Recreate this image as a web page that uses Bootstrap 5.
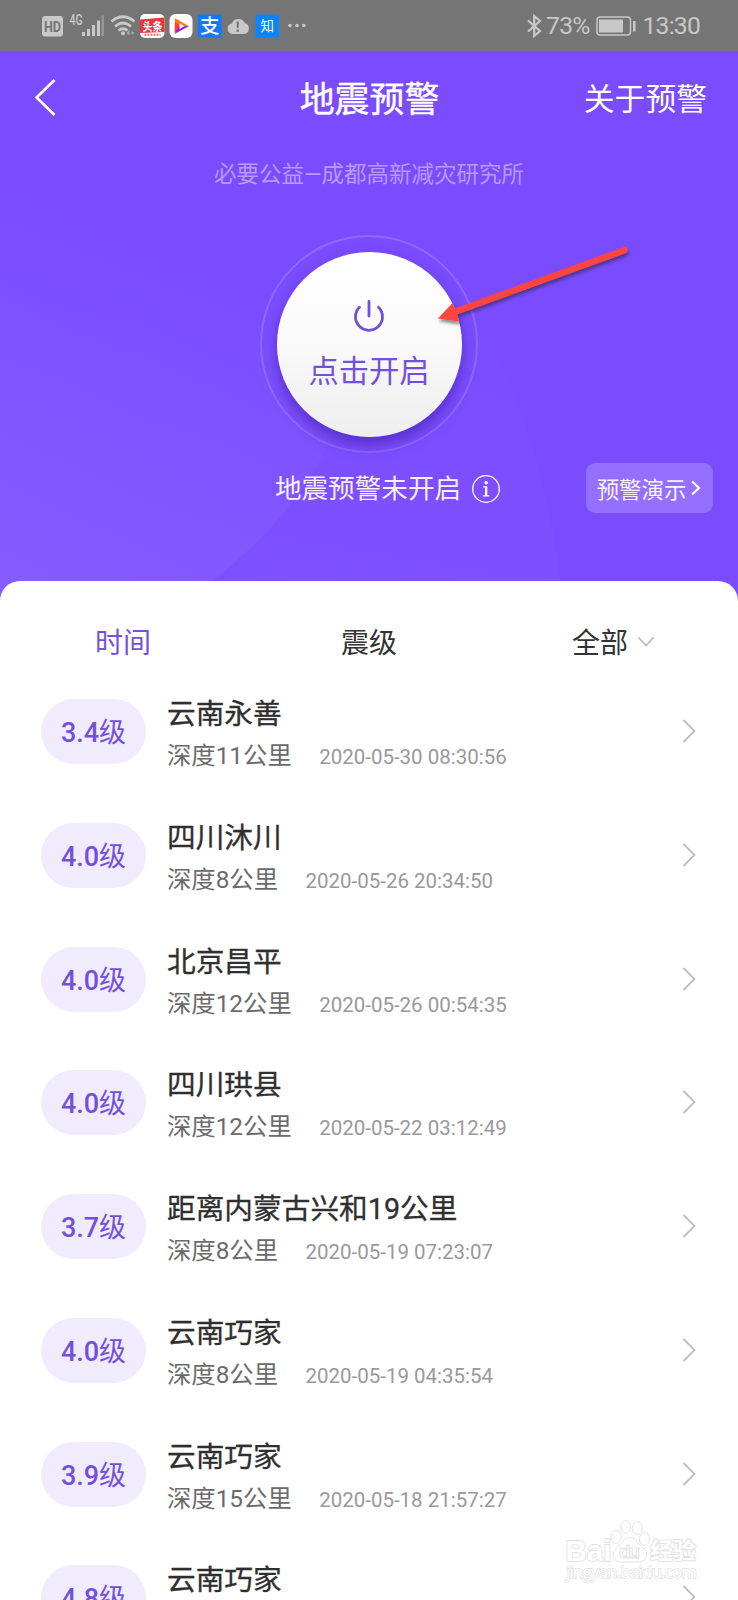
<!DOCTYPE html>
<html lang="zh-CN">
<head>
<meta charset="utf-8">
<meta name="viewport" content="width=device-width, initial-scale=1">
<title>地震预警</title>
<link href="https://cdn.jsdelivr.net/npm/bootstrap@5.3.0/dist/css/bootstrap.min.css" rel="stylesheet">
<style>
  body { font-family: Roboto, "Noto Sans CJK SC", sans-serif; color: #333; background: #fff; height: 1600px; overflow: hidden; }
  svg { display: block; flex: none; }
  .phone { width: 738px; height: 1600px; }
  .sysbar { height: 51px; background: #757575; color: #c8c8c8; padding: 0 38px 0 42px; }
  .sysbar .clock { font-size: 24.7px; line-height: 30px; letter-spacing: -.8px; padding-top: 1px; }
  .battery { margin: 0 7px 0 6px; }
  .hero { height: 530px; background: #7a4bff; }
  .hero-waves { left: 0; top: 0; }
  .topbar { height: 97px; padding: 0 31px 0 34px; }
  .topbar .back { margin-bottom: 5px; }
  .topbar .page-name { font-size: 34.9px; line-height: 40px; -webkit-text-stroke: .4px #fff; margin: 2px 2px 0 0; }
  .topbar .about { font-size: 30.8px; line-height: 40px; }
  .side { flex: 1 1 0; }
  .sponsor { font-size: 22.5px; line-height: 30px; margin-top: 11px; color: #b69aff; }
  .ring { width: 218px; height: 218px; border: 2px solid #8f68ff; margin-top: 46px; }
  .power { width: 185px; height: 185px; background: linear-gradient(#fff 10%, #f8f8f8 55%, #eee); color: #7350dc; box-shadow: 0 8px 14px rgba(50, 20, 150, .5); border: 0; padding-top: 48px; }
  .power .power-label { font-size: 30.3px; line-height: 40px; margin-top: 20px; }
  .state { height: 50px; margin-top: 10px; padding-right: 25px; }
  .state .state-text { font-size: 26.6px; line-height: 36px; color: #f6f0ff; margin-left: 63px; padding-top: 2px; }
  .state .info-icon { margin: 2px 0 0 10px; }
  .demo { width: 127px; height: 50px; border-radius: 9px; background: #956fff; font-size: 22.4px; line-height: 30px; color: #f8f4ff; padding-top: 3px; }
  .demo svg { margin: 0 0 4px 3px; }
  .sheet-wrap { height: 1019px; background: linear-gradient(90deg, #845cff, #7a4bff 30%); }
  .sheet { height: 1019px; border-radius: 20px 20px 0 0; overflow: hidden; }
  .tabs-row { height: 98px; padding-top: 43px; font-size: 28px; line-height: 40px; }
  .tabs-row .filter { padding-right: 3px; }
  .tabs-row .filter svg { margin: 12px 0 0 9px; }
  .quake { height: 123.75px; padding: 20px 41px 0 41px; }
  .level { width: 105px; height: 65px; background: #f1ecfd; color: #7350dc; font-size: 27px; font-weight: 500; line-height: 68px; }
  .info { margin-left: 21px; }
  .place { font-size: 28.7px; line-height: 36px; -webkit-text-stroke: .3px #2f2f2f; margin-top: -3px; color: #2f2f2f; }
  .depth { font-size: 24.35px; line-height: 30px; color: #6b6b6b; margin-top: 9px; }
  .when { font-size: 20.5px; line-height: 30px; color: #999; margin: 10px 0 0 27.400px; }
  .purple { color: #7350dc; }
  .arrow { left: 420px; top: 235px; }
  .mark-logo { left: 560px; top: 1512px; }
</style>
</head>
<body>
<main class="phone position-relative overflow-hidden">
  <header class="sysbar d-flex align-items-center justify-content-between">
    <svg width="270" height="51" viewBox="42 0 270 51" fill="#c8c8c8">
      <rect x="42" y="16" width="21" height="20.500" rx="3"/>
      <text x="44" y="31.500" font-size="15" font-weight="700" fill="#757575" textLength="17" lengthAdjust="spacingAndGlyphs">HD</text>
      <text x="69.500" y="25" font-size="14" font-weight="500" textLength="13" lengthAdjust="spacingAndGlyphs">4G</text>
      <path d="M82 32h3v4h-3zM87 29h3v7h-3zM92 25h3v11h-3zM97 20.500h3v15.500h-3z"/>
      <path d="M101.500 15.500h2.500v20.500h-2.500z" fill="#969696"/>
      <g fill="none" stroke="#c8c8c8" stroke-width="2.700"><path d="M111.500 21.500Q123 12 134.500 21.500M115 26.500Q123 19.500 131 26.500M118.500 30.500Q123 27 127.500 30.500"/></g>
      <circle cx="123" cy="33.300" r="2"/>
      <path d="M126.500 33l3-3.500v6zM131.500 31l3 2-3 2z" fill="#aaa"/>
      <rect x="140" y="14" width="24.500" height="24" rx="5" fill="#fff"/>
      <path d="M140 19.500L164.500 17.500V32L140 33z" fill="#e8363a"/>
      <text x="142.500" y="30.500" font-size="11.500" font-weight="700" fill="#fff" textLength="20" lengthAdjust="spacingAndGlyphs">头条</text>
      <path d="M144.500 34.800h16" stroke="#e86a6c" stroke-width="2" stroke-dasharray="2 1"/>
      <rect x="169.500" y="14" width="23" height="24" rx="6" fill="#fff"/>
      <path d="M175 18.500L180 21V29L174.500 33z" fill="#f5452e"/>
      <path d="M175 18.500L189 26 185 28.500 175 22z" fill="#ff7a16"/>
      <path d="M174.500 34L189 26 179 26.500z" fill="#a51bea"/>
      <path d="M179.500 23.500L184.500 26 179.500 29z" fill="#fff"/>
      <rect x="198" y="14.500" width="23.500" height="23" fill="#1478ff"/>
      <text x="200" y="32.500" font-size="19.500" font-weight="500" fill="#fff">支</text>
      <path d="M232.500 34a5.300 5.300 0 0 1-.5-10.500 6.800 6.800 0 0 1 12.600-.5 5.600 5.600 0 0 1-.6 11z"/>
      <path d="M236.500 21.500h2.400l-.4 6.500h-1.600zM236.500 29.500h2.400v2.300h-2.400z" fill="#757575"/>
      <rect x="255.500" y="14.500" width="23.500" height="23" fill="#0a84ff"/>
      <text x="260.500" y="31" font-size="13.500" fill="#fff">知</text>
      <circle cx="290" cy="25.500" r="1.800"/><circle cx="297" cy="25.500" r="1.800"/><circle cx="303.800" cy="25.500" r="1.800"/>
    </svg>
    <div class="d-flex align-items-center">
      <svg width="16" height="24" viewBox="0 0 16 24" fill="none" stroke="#c8c8c8" stroke-width="2.200"><path d="M2 6.500L14 17 8.200 22V2L14 7 2 17.500"/></svg>
      <span class="clock ms-1">73%</span>
      <svg class="battery" width="40" height="20" viewBox="0 0 40 20"><rect x="1" y="1" width="33.500" height="18" rx="3" fill="none" stroke="#c8c8c8" stroke-width="1.500"/><path d="M3 3.500h24v13H3zM37 5h2.500v10.500H37z" fill="#c8c8c8"/></svg>
      <span class="clock">13:30</span>
    </div>
  </header>

  <section class="hero position-relative text-white">
    <svg class="hero-waves position-absolute" width="738" height="530" viewBox="0 0 738 530">
      <defs>
        <linearGradient id="w1" x1="0.5" y1="0" x2="0.1" y2="1"><stop offset=".3" stop-color="#8a64ff" stop-opacity="0"/><stop offset="1" stop-color="#8a64ff" stop-opacity=".55"/></linearGradient>
        <linearGradient id="w2" x1="0.5" y1="0" x2="0.3" y2="1"><stop offset=".2" stop-color="#8459ff" stop-opacity="0"/><stop offset="1" stop-color="#8459ff" stop-opacity=".4"/></linearGradient>
      </defs>
      <path d="M0 60Q240 90 380 160Q530 280 560 530H0z" fill="url(#w2)"/>
      <path d="M0 60Q200 90 378 160Q370 300 328 395Q290 470 212 530H0z" fill="url(#w1)"/>
    </svg>
    <div class="position-relative d-flex flex-column">
      <nav class="topbar d-flex align-items-center">
        <div class="side back"><svg width="22" height="38" viewBox="0 0 22 38" fill="none" stroke="#fff" stroke-width="2.600"><path d="M20.500 2L2.500 19.500 20.500 37"/></svg></div>
        <div class="page-name">地震预警</div>
        <div class="side about text-end">关于预警</div>
      </nav>
      <div class="sponsor text-center">必要公益—成都高新减灾研究所</div>
      <div class="ring rounded-circle align-self-center d-flex align-items-center justify-content-center">
        <button class="power rounded-circle d-flex flex-column align-items-center">
          <svg width="32" height="32" viewBox="0 0 32 32" fill="none" stroke="#7350dc" stroke-width="2.800" stroke-linecap="round"><path d="M16 1.500V16M6.500 7.200a13.500 13.500 0 1 0 19 0"/></svg>
          <span class="power-label">点击开启</span>
        </button>
      </div>
      <div class="state d-flex align-items-center">
        <div class="side"></div>
        <div class="d-flex align-items-center">
          <span class="state-text">地震预警未开启</span>
          <svg class="info-icon" width="30" height="30" viewBox="0 0 30 30"><circle cx="15" cy="15" r="13.300" fill="none" stroke="#fff" stroke-width="1.300"/><path d="M12.300 12.200h4v9h2v1.300h-6.300v-1.300h2v-7.700h-1.700z" fill="#fff"/><circle cx="15.200" cy="8.700" r="1.700" fill="#fff"/></svg>
        </div>
        <div class="side d-flex justify-content-end">
          <div class="demo d-flex align-items-center justify-content-center">预警演示<svg width="13" height="18" viewBox="0 0 13 18" fill="none" stroke="#fff" stroke-width="2.200"><path d="M3 2.500L10 9 3 15.500"/></svg></div>
        </div>
      </div>
    </div>
  </section>

  <section class="sheet-wrap position-relative">
    <div class="sheet bg-white">
      <div class="tabs-row row g-0 text-center">
        <div class="col-4 purple">时间</div>
        <div class="col-4">震级</div>
        <div class="filter col-4 d-flex justify-content-center align-items-start">全部<svg width="18" height="12" viewBox="0 0 18 12" fill="none" stroke="#bbb" stroke-width="1.800"><path d="M1.500 1.500L9 9.500 16.500 1.500"/></svg></div>
      </div>
      <div id="quakes"></div>
    </div>
  </section>

  <svg class="arrow position-absolute" width="220" height="100" viewBox="420 235 220 100">
    <defs><filter id="sh" x="-10%" y="-10%" width="120%" height="130%"><feDropShadow dx="1" dy="3" stdDeviation="1.500" flood-color="#222" flood-opacity=".5"/></filter></defs>
    <g filter="url(#sh)"><path d="M456 311.500L624.500 250.200" stroke="#ff4440" stroke-width="6.500" stroke-linecap="round"/><path d="M438 318.500L452.500 303 459.500 321.500z" fill="#ff4440"/></g>
  </svg>

  <svg class="mark-logo position-absolute" width="150" height="80" viewBox="560 1512 150 80" fill="#fff" stroke="#e2e2e2" stroke-width="1">
    <g font-weight="700" font-family="'Liberation Sans','Noto Sans CJK SC',sans-serif" paint-order="stroke" stroke-width="1.800">
      <text x="565.500" y="1561" font-size="29" textLength="46" lengthAdjust="spacingAndGlyphs">Bai</text>
      <text x="650" y="1559" font-size="23" textLength="46">经验</text>
      <text x="566" y="1578" font-size="17" font-weight="400" font-family="'Open Sans',sans-serif" stroke-width="1.400" textLength="131">jingyan.baidu.com</text>
    </g>
    <path d="M629.500 1537.500c-5 0-6 4-10 8-4 3.500-7 6-6 11 1.500 5.500 6 6 16 5.500 10 .5 15.500 0 17-5.500 1-5-2-7.500-6-11-4-4-6-8-11-8z"/>
    <ellipse cx="616" cy="1537" rx="5" ry="6.500"/><ellipse cx="625.700" cy="1527" rx="5" ry="6.500"/><ellipse cx="637.300" cy="1528" rx="5" ry="6.500"/><ellipse cx="644.500" cy="1539" rx="5" ry="6.500"/>
    <text x="619" y="1558" font-size="19" font-weight="700" font-family="'Liberation Sans',sans-serif" textLength="21">du</text>
  </svg>
</main>
<script src="https://cdn.jsdelivr.net/npm/bootstrap@5.3.0/dist/js/bootstrap.bundle.min.js"></script>
<script>
  const quakes = [
    ['3.4', '云南永善', 11, '2020-05-30 08:30:56'],
    ['4.0', '四川沐川', 8, '2020-05-26 20:34:50'],
    ['4.0', '北京昌平', 12, '2020-05-26 00:54:35'],
    ['4.0', '四川珙县', 12, '2020-05-22 03:12:49'],
    ['3.7', '距离内蒙古兴和19公里', 8, '2020-05-19 07:23:07'],
    ['4.0', '云南巧家', 8, '2020-05-19 04:35:54'],
    ['3.9', '云南巧家', 15, '2020-05-18 21:57:27'],
    ['4.8', '云南巧家', 0, '']
  ];
  document.getElementById('quakes').innerHTML = quakes.map(([level, place, depth, when]) => `
    <div class="quake d-flex align-items-start">
      <div class="level rounded-pill text-center">${level}<span class="fw-normal">级</span></div>
      <div class="info flex-grow-1">
        <div class="place">${place}</div>
        ${when ? `<div class="d-flex"><span class="depth">深度${depth}公里</span><span class="when">${when}</span></div>` : ''}
      </div>
      <svg class="mt-3" width="16" height="32" viewBox="0 0 16 32" fill="none" stroke="#bdbdbd" stroke-width="1.800"><path d="M2.500 5L13.500 16 2.500 27"/></svg>
    </div>`).join('');
</script>
</body>
</html>
